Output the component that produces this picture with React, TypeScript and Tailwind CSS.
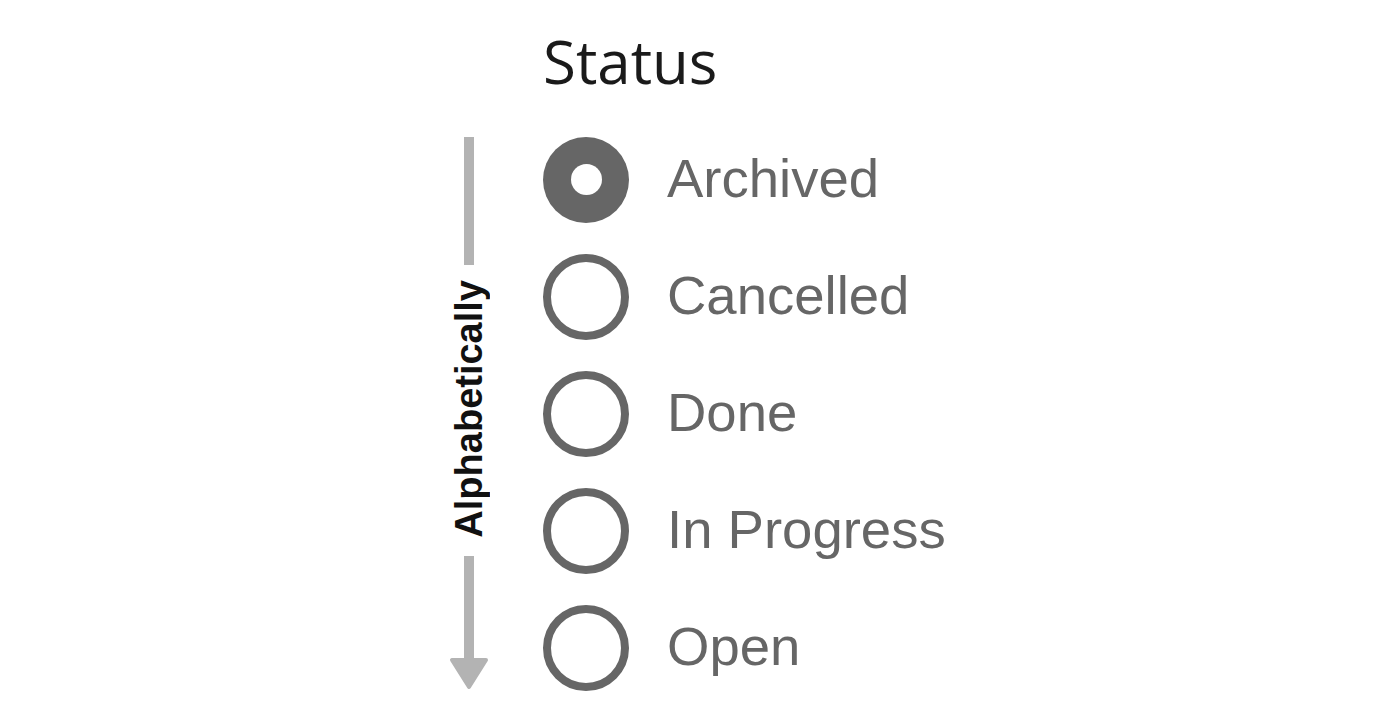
import React from 'react';

const statuses = ['Archived', 'Cancelled', 'Done', 'In Progress', 'Open'];

const Radio: React.FC<{ checked: boolean }> = ({ checked }) =>
  checked ? (
    <span className="flex h-[86px] w-[86px] shrink-0 items-center justify-center rounded-full bg-[#666666]">
      <span className="h-[31px] w-[31px] rounded-full bg-white" />
    </span>
  ) : (
    <span className="h-[86px] w-[86px] shrink-0 rounded-full border-[8px] border-[#666666]" />
  );

const SortHint: React.FC = () => (
  <div className="flex w-[40px] flex-col items-center pt-[137px]">
    <div className="h-[128px] w-[10px] bg-[#b3b3b3]" />
    <div
      className="mt-[15px] rotate-180 text-[38px] leading-[40px] font-bold text-[#111111] [writing-mode:vertical-rl]"
      style={{ fontFamily: '"Liberation Sans", Arial, sans-serif' }}
    >
      Alphabetically
    </div>
    <svg className="mt-[18px]" width="40" height="134" viewBox="0 0 40 134">
      <rect x="15" y="0" width="10" height="106" fill="#b3b3b3" />
      <polygon
        points="3,104 37,104 20,131"
        fill="#b3b3b3"
        stroke="#b3b3b3"
        strokeWidth="4"
        strokeLinejoin="round"
      />
    </svg>
  </div>
);

export default function App() {
  return (
    <div className="h-[726px] w-full overflow-hidden bg-white">
      <div className="flex pl-[449px]">
        <SortHint />
        <div className="ml-[54px] flex flex-col">
          <h1
            className="mt-[31px] text-[60px] leading-[60px] font-normal text-[#1a1a1a]"
            style={{ fontFamily: '"Open Sans", sans-serif' }}
          >
            Status
          </h1>
          <ul className="mt-[30px] flex flex-col">
            {statuses.map((s, i) => (
              <li key={s} className="flex h-[117px] items-center gap-[38px]">
                <Radio checked={i === 0} />
                <span
                  className="text-[54.5px] leading-none text-[#666666]"
                  style={{ fontFamily: '"Liberation Sans", Arial, sans-serif' }}
                >
                  {s}
                </span>
              </li>
            ))}
          </ul>
        </div>
      </div>
    </div>
  );
}
